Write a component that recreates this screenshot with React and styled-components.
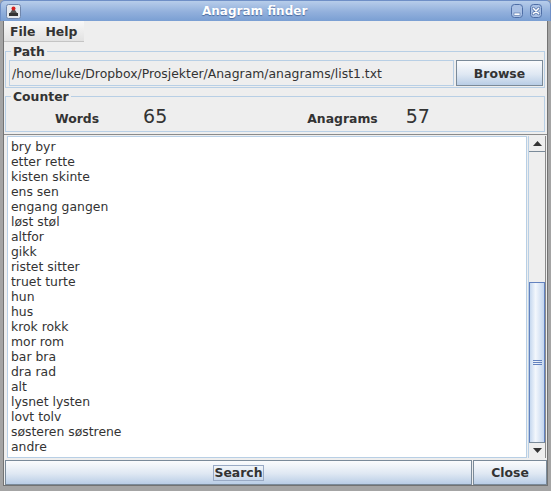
import React from 'react'
import styled, { createGlobalStyle } from 'styled-components'

const GlobalStyle = createGlobalStyle`
  html, body {
    margin: 0;
    padding: 0;
    background: #eeeeee;
  }
  body {
    font-family: "DejaVu Sans", "Liberation Sans", sans-serif;
    font-size: 12.4px;
    color: #333333;
  }
`;

const words = [
  'bry byr', 'etter rette', 'kisten skinte', 'ens sen', 'engang gangen',
  'løst støl', 'altfor', 'gikk', 'ristet sitter', 'truet turte', 'hun',
  'hus', 'krok rokk', 'mor rom', 'bar bra', 'dra rad', 'alt',
  'lysnet lysten', 'lovt tolv', 'søsteren søstrene', 'andre',
];

const AppIcon = () => (
  <svg width="15" height="15" viewBox="0 0 15 15">
    <rect x="0.5" y="0.5" width="14" height="14" rx="2" fill="#e4e8ee" stroke="#6f86ad" />
    <rect x="3" y="9" width="9" height="3" fill="#333" />
    <path d="M4 9 L6 6 L9 6 L11 9 Z" fill="#555" />
    <circle cx="7.5" cy="4.5" r="2" fill="#d42020" />
  </svg>
);

const MinIcon = () => (
  <svg width="12" height="14" viewBox="0 0 12 14">
    <rect x="0.5" y="0.5" width="11" height="13" rx="3" fill="#a9c0e4" stroke="#4e6ea6" />
    <rect x="3" y="9" width="6" height="2.5" fill="#fff" stroke="#4e6ea6" strokeWidth="0.6" />
  </svg>
);

const CloseIcon = () => (
  <svg width="12" height="14" viewBox="0 0 12 14">
    <rect x="0.5" y="0.5" width="11" height="13" rx="3" fill="#a9c0e4" stroke="#4e6ea6" />
    <path d="M3.3 4.3 L8.7 9.7 M8.7 4.3 L3.3 9.7" stroke="#4e6ea6" strokeWidth="3" strokeLinecap="round" />
    <path d="M3.3 4.3 L8.7 9.7 M8.7 4.3 L3.3 9.7" stroke="#fff" strokeWidth="1.6" strokeLinecap="round" />
  </svg>
);

const ArrowIcon = ({ down }) => (
  <svg width="9" height="5" viewBox="0 0 9 5">
    {down
      ? <path d="M0 0 L9 0 L4.5 5 Z" fill="#333" />
      : <path d="M0 5 L9 5 L4.5 0 Z" fill="#333" />}
  </svg>
);

const App = () => {
  document.title = "Anagram finder";
  return (
    <>
      <GlobalStyle />
      <Window>
        <TitleBar>
          <AppIcon />
          <Title>Anagram finder</Title>
          <TitleButtons>
            <MinIcon />
            <CloseIcon />
          </TitleButtons>
        </TitleBar>
        <Frame>
          <MenuBar>
            <MenuItem>File</MenuItem>
            <MenuItem>Help</MenuItem>
          </MenuBar>
          <Group $top={4} $bottom={0}>
            <Legend>Path</Legend>
            <PathRow>
              <TextField>/home/luke/Dropbox/Prosjekter/Anagram/anagrams/list1.txt</TextField>
              <Button $width={87}>Browse</Button>
            </PathRow>
          </Group>
          <Group $top={3} $bottom={2}>
            <Legend>Counter</Legend>
            <CounterRow>
              <Label $offset={46}>Words</Label>
              <Count $offset={44}>65</Count>
              <Label $offset={140}>Anagrams</Label>
              <Count $offset={28}>57</Count>
            </CounterRow>
          </Group>
          <ScrollPane>
            <List>
              {words.map((w) => (
                <Item key={w}>{w}</Item>
              ))}
            </List>
            <ScrollBar>
              <ArrowButton><ArrowIcon /></ArrowButton>
              <Track>
                <Thumb>
                  <Grip />
                </Thumb>
              </Track>
              <ArrowButton><ArrowIcon down /></ArrowButton>
            </ScrollBar>
          </ScrollPane>
          <ButtonRow>
            <Button $grow>
              <Focus>Search</Focus>
            </Button>
            <Button $width={74}>Close</Button>
          </ButtonRow>
        </Frame>
      </Window>
    </>
  )
}

const Window = styled.div`
  width: 551px;
  height: 491px;
  display: flex;
  flex-direction: column;
  background: #a4a4a4;
  overflow: hidden;
`;

const TitleBar = styled.div`
  height: 21px;
  flex: none;
  box-sizing: border-box;
  display: flex;
  align-items: center;
  padding: 0 8px 0 5px;
  border: 1px solid #6f8fc6;
  border-bottom: none;
  border-radius: 5px 5px 0 0;
  background: linear-gradient(#b7cdea, #92b0dc 55%, #7a9fd3);
`;

const Title = styled.div`
  flex: 1;
  padding-left: 181px;
  font-size: 12px;
  font-weight: bold;
  color: #ffffff;
  text-shadow: 0 1px 1px #4a6a9e;
`;

const TitleButtons = styled.div`
  display: flex;
  gap: 7px;
  svg { display: block; }
`;

const Frame = styled.div`
  flex: 1;
  display: flex;
  flex-direction: column;
  min-height: 0;
  margin: 0 3px 5px 3px;
  border: 1px solid #737373;
  border-top: none;
  background: #eeeeee;
`;

const MenuBar = styled.div`
  align-self: flex-start;
  display: flex;
  height: 20px;
  align-items: center;
  padding: 0 2px 0 1px;
  background: linear-gradient(#f8f8f8, #e2e2e2);
  border-bottom: 1px solid #c4c4c4;
`;

const MenuItem = styled.div`
  padding: 0 5px;
  font-weight: bold;
  color: #333;
`;

const Group = styled.fieldset`
  margin: ${(p) => p.$top}px 2px ${(p) => p.$bottom}px 1px;
  padding: 0 1px 1px 3px;
  border: 1px solid #b8cfe5;
  min-width: 0;
`;

const Legend = styled.legend`
  padding: 0 2px;
  margin-left: 2px;
  font-weight: bold;
  color: #333;
  line-height: 11px;
`;

const PathRow = styled.div`
  display: flex;
  margin-top: 3px;
  height: 26px;
`;

const TextField = styled.div`
  flex: 1;
  display: flex;
  align-items: center;
  padding-left: 2px;
  margin-right: 2px;
  border: 1px solid #b8cfe5;
  color: #333;
  white-space: nowrap;
  overflow: hidden;
`;

const Button = styled.div`
  box-sizing: border-box;
  ${(p) => (p.$grow ? 'flex: 1;' : `width: ${p.$width}px;`)}
  display: flex;
  align-items: center;
  justify-content: center;
  border: 1px solid #7a8a99;
  background: linear-gradient(#fbfcfd, #dfe8f3 55%, #b9cde6);
  font-weight: bold;
  color: #333;
`;

const Focus = styled.span`
  border: 1px solid #99aac5;
  padding: 0 1px;
  line-height: 14px;
`;

const CounterRow = styled.div`
  display: flex;
  align-items: baseline;
  height: 28px;
  padding-top: 3px;
  box-sizing: border-box;
`;

const Label = styled.span`
  margin-left: ${(p) => p.$offset}px;
  font-weight: bold;
  color: #333;
`;

const Count = styled.span`
  margin-left: ${(p) => p.$offset}px;
  font-size: 19px;
  color: #333;
`;

const ScrollPane = styled.div`
  flex: 1;
  min-height: 0;
  display: flex;
  margin: 0 0 1px 0;
  border-top: 1px solid #8a8a8a;
  padding: 1px 1px 1px 3px;
  gap: 1px;
`;

const List = styled.div`
  flex: 1;
  overflow: hidden;
  background: #ffffff;
  border: 1px solid #b8cfe5;
  padding: 2px 3px;
`;

const Item = styled.div`
  height: 15px;
  line-height: 15px;
  color: #333;
  white-space: nowrap;
`;

const ScrollBar = styled.div`
  width: 16px;
  display: flex;
  flex-direction: column;
  border-left: 1px solid #b8cfe5;
  border-right: 1px solid #8a8a8a;
  background: #eeeeee;
`;

const ArrowButton = styled.div`
  height: 15px;
  display: flex;
  align-items: center;
  justify-content: center;
  border-bottom: 1px solid #7a8a99;
  &:last-child {
    border-bottom: none;
    border-top: 1px solid #7a8a99;
  }
  svg { display: block; }
`;

const Track = styled.div`
  flex: 1;
  display: flex;
  flex-direction: column;
  justify-content: flex-end;
`;

const Thumb = styled.div`
  height: 160px;
  box-sizing: border-box;
  border: 1px solid #6382bf;
  border-bottom: none;
  background: linear-gradient(90deg, #c6d8ef, #f3f7fc 40%, #c3d5ee);
  display: flex;
  align-items: center;
  justify-content: center;
`;

const Grip = styled.div`
  width: 9px;
  height: 5px;
  background: repeating-linear-gradient(#6382bf 0 1px, transparent 1px 2px);
`;

const ButtonRow = styled.div`
  display: flex;
  height: 25px;
  gap: 1px;
  padding-left: 1px;
`;

export default App
